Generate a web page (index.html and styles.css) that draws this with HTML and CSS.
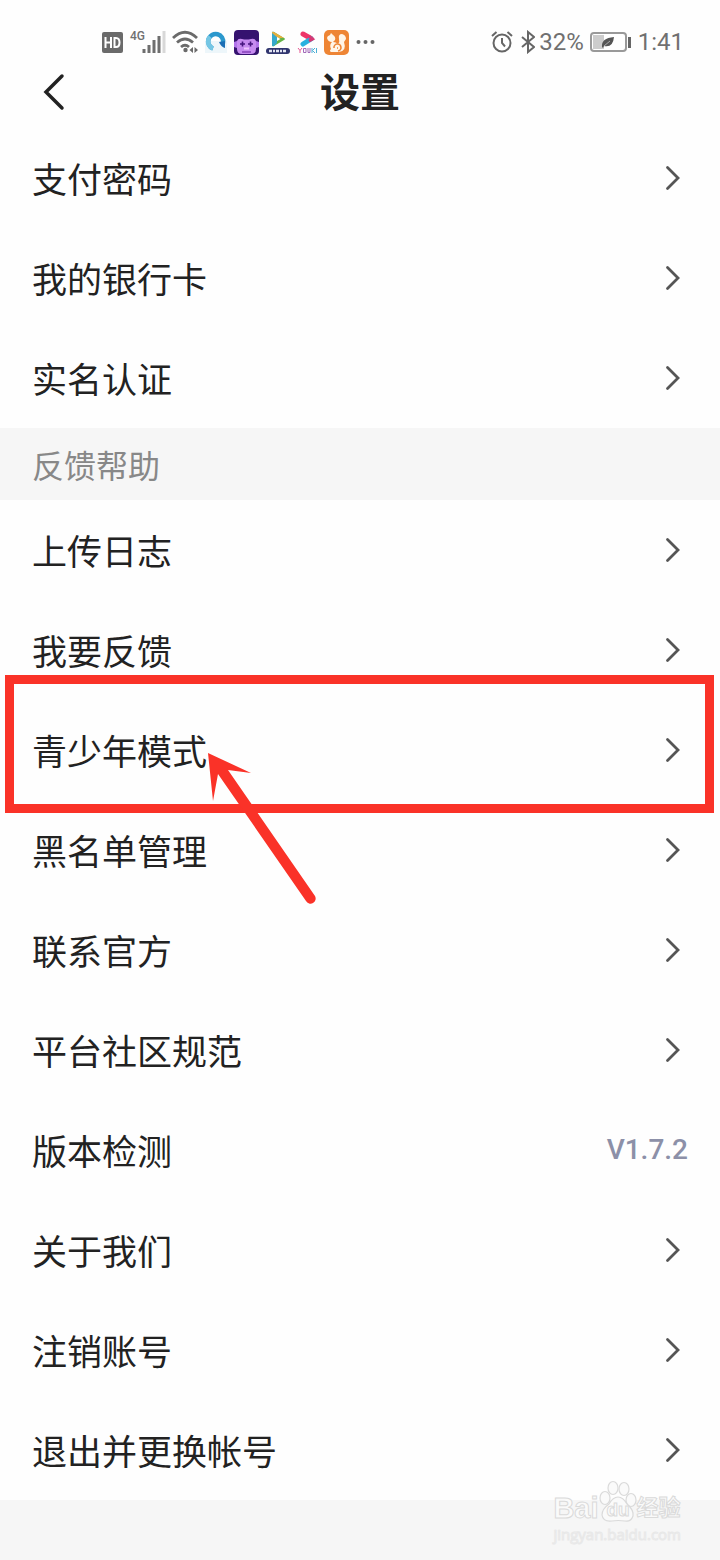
FILE: index.html
```html
<!DOCTYPE html>
<html lang="zh-CN">
<head>
  <meta charset="UTF-8">
  <meta name="viewport" content="width=device-width, initial-scale=1.0">
  <title>设置</title>
  <link rel="stylesheet" href="styles.css">
</head>
<body>
  <div class="status-bar">
    <div class="status-left">
      <svg class="icon-hd" width="21" height="21" viewBox="0 0 21 21">
        <rect width="21" height="21" rx="2" fill="#6a6a6a"/>
        <path d="M3.500 5v11M9 5v11M3.500 10.500H9M12.500 5.900v9.200h1.500q3.500 0 3.500-4.600t-3.500-4.600z" fill="none" stroke="#fff" stroke-width="2"/>
      </svg>
      <span class="network">4G</span>
      <svg width="24" height="24" viewBox="0 0 24 24">
        <path d="M2 19v4M7 15v8M12 10v13M17 6v17" stroke="#6e6e6e" stroke-width="3"/>
        <path d="M22 1v22" stroke="#d8d8d8" stroke-width="3"/>
      </svg>
      <svg class="icon-wifi" width="26" height="24" viewBox="0 0 26 24">
        <path d="M1 8Q13-3.500 25 8M5 12.500q8-7 16 0M9 17q4-3.500 8 0" fill="none" stroke="#6a6a6a" stroke-width="2.800"/>
        <circle cx="13.500" cy="20" r="2.200" fill="#6a6a6a"/>
        <path d="M21 17v6l-3.500-3zM22.500 17v6l3.500-3z" fill="#6a6a6a"/>
      </svg>
      <svg width="22" height="24" viewBox="0 0 22 24">
        <rect y="11" width="22" height="12" fill="#edf6fa"/>
        <path d="M8 18.500A7.500 7.500 0 1 1 18 13" fill="none" stroke="#2b98cd" stroke-width="4.500"/>
        <path d="M8 18.500A7.500 7.500 0 0 1 5 6.500" fill="none" stroke="#74c6e4" stroke-width="4.500"/>
        <path d="M14 12l6-1v7q-4-1-6-6z" fill="#1c6fb5"/>
      </svg>
      <svg width="25" height="25" viewBox="0 0 25 25">
        <rect width="25" height="25" rx="4" fill="#35126f"/>
        <path d="M0 12l3-1v7l-3-1zM25 12l-3-1v7l3-1z" fill="#b273ea"/>
        <path d="M3 11q1-3 5-2 4 1 9 0 4-1 5 2v8q0 5-5 5H8q-5 0-5-5z" fill="#c68bef"/>
        <path d="M8.500 11.500v5M6 14h5M16.500 11.500v5M14 14h5" stroke="#45157d" stroke-width="1.600"/>
        <path d="M10 18.500h5" stroke="#efc4ff" stroke-width="2"/>
        <path d="M8 22h9" stroke="#8440b8" stroke-width="1.500"/>
      </svg>
      <svg width="24" height="25" viewBox="0 0 24 25">
        <path d="M6 3q0-2 2-1l10 6q2 1 0 2L8 16q-2 1-2-1z" fill="#63b346"/>
        <path d="M6 3q0-2 2-1l3 3v8l-3 3q-2 1-2-1z" fill="#35a9cc"/>
        <path d="M6 3q0-2 2-1l10 6h-6z" fill="#e7ae3d"/>
        <path d="M11 7l3.500 2-3.500 2z" fill="#fff"/>
        <rect x="0" y="18" width="24" height="6" rx="3" fill="#30356e"/>
        <path d="M3 21h18" stroke="#e1e3f1" stroke-width="2.500" stroke-dasharray="3 1 2 1"/>
      </svg>
      <svg width="20" height="24" viewBox="0 0 20 24">
        <path d="M6 4l8 4.500" stroke="#ee3568" stroke-width="5" stroke-linecap="round"/>
        <path d="M6 14l8-5" stroke="#28b1df" stroke-width="5" stroke-linecap="round"/>
        <path d="M12 6.500L15.500 9 12 11" fill="none" stroke="#d83773" stroke-width="3"/>
        <path d="M1 18l2 2.500L5 18M3 20.500V23" fill="none" stroke="#e45591"/>
        <path d="M6.500 18.500h2.500v4H6.500zM11 18v4.500h2V18" fill="none" stroke="#a168b9"/>
        <path d="M15 18v5M18 18l-2.500 2.500L18 23M19.500 18v5" fill="none" stroke="#4aafd5"/>
      </svg>
      <svg width="25" height="25" viewBox="0 0 25 25">
        <rect width="25" height="25" rx="5" fill="#ee8535"/>
        <path d="M3 8q0-2 3-3l1-2 2 2q3 2 2 5l-2 2q3 0 5 2 2-2 1-5-1-5 3-5 4 1 4 5l-2 3q3 9-5 10H7q-2-1 0-3-2-4 1-7-4 0-5-4z" fill="#fff5e8"/>
        <path d="M10 18a3.500 3.500 0 1 1 4 3M14 18h-1" fill="none" stroke="#ee8535" stroke-width="1.600"/>
      </svg>
      <svg width="20" height="24" viewBox="0 0 20 24">
        <g fill="#666"><circle cx="2.500" cy="12" r="2"/><circle cx="9.500" cy="12" r="2"/><circle cx="16.500" cy="12" r="2"/></g>
      </svg>
    </div>
    <div class="status-right">
      <svg width="22" height="24" viewBox="0 0 22 24" fill="none" stroke="#666" stroke-width="2">
        <circle cx="11" cy="13" r="8.500"/>
        <path d="M11 8v5l3 3.500M1 6l4.500-4M21 6l-4.500-4"/>
      </svg>
      <svg class="icon-bluetooth" width="14" height="24" viewBox="0 0 14 24" fill="none" stroke="#666" stroke-width="2">
        <path d="M1 7l12 10-6 5V2l6 5L1 17"/>
      </svg>
      <span>32%</span>
      <svg class="icon-battery" width="42" height="22" viewBox="0 0 42 22">
        <rect x="1" y="2" width="35" height="18" rx="3" fill="#fff" stroke="#999" stroke-width="2"/>
        <path d="M3 4h11v14H3z" fill="#ccc"/>
        <path d="M12 16q-1-9 12-10-1 11-10 9l-1 2z" fill="#555"/>
        <path d="M14 15l6-5" stroke="#aaa"/>
        <path d="M39.500 6v11" stroke="#666" stroke-width="3"/>
      </svg>
      <span>1:41</span>
    </div>
  </div>

  <header class="header">
    <button class="back" aria-label="返回">
      <svg width="24" height="40" viewBox="0 0 24 40"><path d="M20 4L4 20l16 16" fill="none" stroke="#222" stroke-width="3.500" stroke-linecap="round"/></svg>
    </button>
    <h1>设置</h1>
  </header>

  <svg class="symbols">
    <symbol id="arrow" viewBox="0 0 16 26"><path d="M2.500 2.500L13 13 2.500 23.500" fill="none" stroke="#555" stroke-width="2.800" stroke-linecap="round"/></symbol>
  </svg>

  <main>
    <nav class="list">
      <a href="#" class="item">支付密码<svg class="arrow"><use href="#arrow"/></svg></a>
      <a href="#" class="item">我的银行卡<svg class="arrow"><use href="#arrow"/></svg></a>
      <a href="#" class="item">实名认证<svg class="arrow"><use href="#arrow"/></svg></a>
    </nav>
    <h2 class="section-title">反馈帮助</h2>
    <nav class="list">
      <a href="#" class="item">上传日志<svg class="arrow"><use href="#arrow"/></svg></a>
      <a href="#" class="item">我要反馈<svg class="arrow"><use href="#arrow"/></svg></a>
      <a href="#" class="item marked">青少年模式<svg class="arrow"><use href="#arrow"/></svg>
        <svg class="pointer" viewBox="0 0 120 160">
          <path d="M8 3L51 23L28 20L115 146A5 5 0 0 1 106 151L18 24L13 51Z" fill="#fa3228"/>
        </svg>
      </a>
      <a href="#" class="item">黑名单管理<svg class="arrow"><use href="#arrow"/></svg></a>
      <a href="#" class="item">联系官方<svg class="arrow"><use href="#arrow"/></svg></a>
      <a href="#" class="item">平台社区规范<svg class="arrow"><use href="#arrow"/></svg></a>
      <a href="#" class="item">版本检测<span class="version">V1.7.2</span></a>
      <a href="#" class="item">关于我们<svg class="arrow"><use href="#arrow"/></svg></a>
      <a href="#" class="item">注销账号<svg class="arrow"><use href="#arrow"/></svg></a>
      <a href="#" class="item">退出并更换帐号<svg class="arrow"><use href="#arrow"/></svg></a>
    </nav>
  </main>

  <footer class="footer">
    <div class="watermark">
      <div class="brand">
        <span class="bai">Bai</span>
        <span class="paw">
          <svg width="38" height="44" viewBox="0 0 38 44" fill="#fafafa" stroke="#dadada" stroke-width="1.200">
            <ellipse cx="6" cy="18" rx="5" ry="6.500"/>
            <ellipse cx="14" cy="8" rx="5" ry="6.500"/>
            <ellipse cx="25" cy="9" rx="5" ry="6.500"/>
            <ellipse cx="32" cy="20" rx="5" ry="6.500"/>
            <path d="M19 17q5 0 9 7 7 6 6 12-2 6-8 5-7-1-13 0-9 1-10-6 0-6 7-11 4-7 9-7z"/>
          </svg>
          <span class="du">du</span>
        </span>
        <span class="jingyan">经验</span>
      </div>
      <div class="site">jingyan.baidu.com</div>
    </div>
  </footer>
</body>
</html>
```
FILE: styles.css
```css
* {
  box-sizing: border-box;
}

body {
  margin: 0;
  min-height: 100vh;
  display: flex;
  flex-direction: column;
  background-color: #fefefe;
  color: #222;
  font-family: 'Noto Sans CJK SC', sans-serif;
}

.status-bar {
  display: flex;
  justify-content: space-between;
  height: 56px;
  padding: 28px 36px 0 102px;
  color: #707070;
  font-family: Roboto, sans-serif;
  font-size: 24px;
  line-height: 28px;
}

.status-left,
.status-right {
  display: flex;
  align-items: center;
}

.status-left {
  gap: 7px;
}

.network {
  align-self: flex-start;
  margin-right: -10px;
  font-size: 12px;
  font-weight: 500;
  line-height: 16px;
}

.icon-wifi {
  margin-left: -1px;
}

.icon-bluetooth {
  margin: 0 4px 0 8px;
}

.icon-battery {
  margin: 0 6px;
}

.header {
  display: flex;
  justify-content: center;
  position: relative;
  height: 72px;
  padding-top: 4px;
}

.header h1 {
  margin: 0;
  font-size: 40px;
  line-height: 60px;
}

.back {
  position: absolute;
  left: 32px;
  top: 8px;
  width: 44px;
  height: 56px;
  padding: 0;
  border: none;
  background: none;
  cursor: pointer;
}

.back svg {
  display: block;
  margin: auto;
}

.symbols {
  position: absolute;
  width: 0;
  height: 0;
}

.item {
  display: flex;
  justify-content: space-between;
  align-items: center;
  position: relative;
  height: 100px;
  padding: 0 32px;
  color: #222;
  font-size: 35px;
  line-height: 52px;
  text-decoration: none;
}

.arrow {
  width: 16px;
  height: 26px;
  margin-right: 7px;
}

.version {
  color: #8c90a8;
  font-family: Roboto, sans-serif;
  font-size: 28px;
  font-weight: 500;
}

.section-title {
  margin: 0;
  padding: 12px 32px;
  background-color: #f6f6f6;
  color: #888;
  font-size: 32px;
  font-weight: 400;
  line-height: 48px;
}

/* red frame around the item */
.marked::before {
  content: '';
  position: absolute;
  inset: -25px 6px -13px 5px;
  border: 9px solid #fa3228;
}

.pointer {
  position: absolute;
  left: 200px;
  top: 50px;
  z-index: 1;
  width: 120px;
  height: 160px;
}

.footer {
  position: relative;
  flex: 1;
  min-height: 60px;
  background-color: #f6f6f6;
}

.watermark {
  position: absolute;
  right: 39px;
  bottom: 16px;
  color: #fafafa;
}

.brand {
  display: flex;
  align-items: flex-end;
  height: 44px;
  font-family: 'Liberation Sans', 'Noto Sans CJK SC', sans-serif;
  font-weight: 700;
  line-height: 32px;
  -webkit-text-stroke: 1px #dadada;
}

.bai {
  font-size: 29px;
}

.paw {
  position: relative;
  height: 44px;
}

.du {
  position: absolute;
  left: 8px;
  bottom: 2px;
  font-size: 19px;
  line-height: 24px;
}

.jingyan {
  font-size: 22px;
}

.site {
  font-family: 'Open Sans', sans-serif;
  font-size: 15px;
  line-height: 20px;
  -webkit-text-stroke: 1px #e8e8e8;
}
```
